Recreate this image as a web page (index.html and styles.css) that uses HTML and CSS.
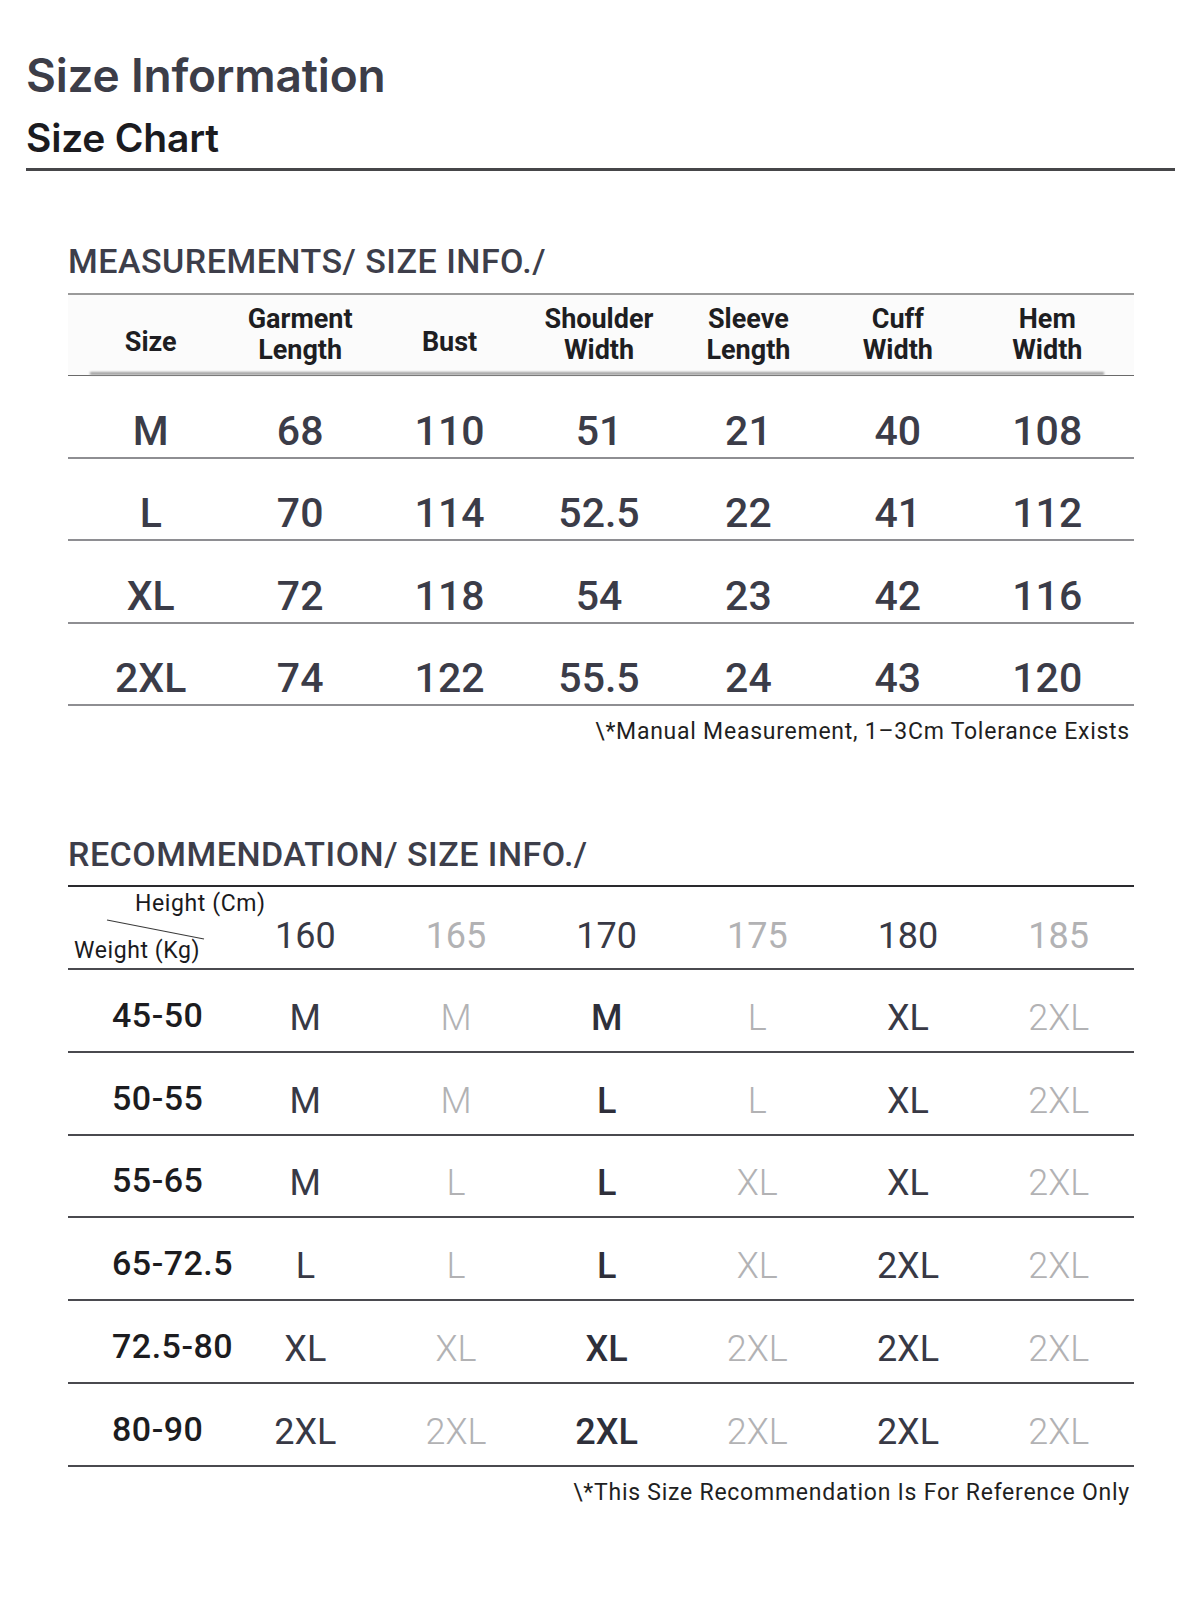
FILE: index.html
```html
<!DOCTYPE html>
<html lang="en">
<head>
<meta charset="utf-8">
<title>Size Information</title>
<link rel="stylesheet" href="styles.css">
</head>
<body>
<div class="page">
  <h1 class="title">Size Information</h1>
  <h2 class="subtitle">Size Chart</h2>
  <div class="divider"></div>

  <section class="block">
    <h3 class="section-title">MEASUREMENTS/ SIZE INFO./</h3>
    <div class="mtable">
      <div class="mhead">
        <div class="hcell single">Size</div>
        <div class="hcell">Garment<br>Length</div>
        <div class="hcell single">Bust</div>
        <div class="hcell">Shoulder<br>Width</div>
        <div class="hcell">Sleeve<br>Length</div>
        <div class="hcell">Cuff<br>Width</div>
        <div class="hcell">Hem<br>Width</div>
      </div>
      <div class="mrow"><span>M</span><span>68</span><span>110</span><span>51</span><span>21</span><span>40</span><span>108</span></div>
      <div class="mrow"><span>L</span><span>70</span><span>114</span><span>52.5</span><span>22</span><span>41</span><span>112</span></div>
      <div class="mrow"><span>XL</span><span>72</span><span>118</span><span>54</span><span>23</span><span>42</span><span>116</span></div>
      <div class="mrow"><span>2XL</span><span>74</span><span>122</span><span>55.5</span><span>24</span><span>43</span><span>120</span></div>
    </div>
    <p class="note">\*Manual Measurement, 1–3Cm Tolerance Exists</p>
  </section>

  <section class="block rec-block">
    <h3 class="section-title">RECOMMENDATION/ SIZE INFO./</h3>
    <div class="rtable">
      <div class="rhead">
        <div class="corner">
          <span class="corner-h">Height (Cm)</span>
          <span class="corner-w">Weight (Kg)</span>
          <svg class="corner-line" width="100" height="24" viewBox="0 0 100 24"><line x1="1" y1="1" x2="98" y2="20" stroke="#3a3a3a" stroke-width="1.1"/></svg>
        </div>
        <span class="hnum dark">160</span><span class="hnum light">165</span><span class="hnum dark">170</span><span class="hnum light">175</span><span class="hnum dark">180</span><span class="hnum light">185</span>
      </div>
      <div class="rrow"><span class="wt">45-50</span><span class="sz dark">M</span><span class="sz light">M</span><span class="sz mid">M</span><span class="sz light">L</span><span class="sz dark">XL</span><span class="sz light">2XL</span></div>
      <div class="rrow"><span class="wt">50-55</span><span class="sz dark">M</span><span class="sz light">M</span><span class="sz mid">L</span><span class="sz light">L</span><span class="sz dark">XL</span><span class="sz light">2XL</span></div>
      <div class="rrow"><span class="wt">55-65</span><span class="sz dark">M</span><span class="sz light">L</span><span class="sz mid">L</span><span class="sz light">XL</span><span class="sz dark">XL</span><span class="sz light">2XL</span></div>
      <div class="rrow"><span class="wt">65-72.5</span><span class="sz dark">L</span><span class="sz light">L</span><span class="sz mid">L</span><span class="sz light">XL</span><span class="sz dark">2XL</span><span class="sz light">2XL</span></div>
      <div class="rrow"><span class="wt">72.5-80</span><span class="sz dark">XL</span><span class="sz light">XL</span><span class="sz mid">XL</span><span class="sz light">2XL</span><span class="sz dark">2XL</span><span class="sz light">2XL</span></div>
      <div class="rrow"><span class="wt">80-90</span><span class="sz dark">2XL</span><span class="sz light">2XL</span><span class="sz mid">2XL</span><span class="sz light">2XL</span><span class="sz dark">2XL</span><span class="sz light">2XL</span></div>
    </div>
    <p class="note">\*This Size Recommendation Is For Reference Only</p>
  </section>
</div>
</body>
</html>
```

FILE: styles.css
```css
* { box-sizing: border-box; }

html, body {
  margin: 0;
  padding: 0;
  background: #ffffff;
}

body {
  width: 1200px;
  min-height: 1608px;
  font-family: Roboto, "Liberation Sans", sans-serif;
}

.page {
  padding: 0 25px 0 26px;
}

.title {
  margin: 46px 0 0;
  font-family: Inter, Roboto, sans-serif;
  font-size: 46px;
  line-height: 58px;
  font-weight: 600;
  color: #3c3d48;
  letter-spacing: -0.2px;
}

.subtitle {
  margin: 10px 0 0;
  font-family: Inter, Roboto, sans-serif;
  font-size: 39px;
  line-height: 48px;
  font-weight: 600;
  color: #1b1b1f;
  letter-spacing: -0.2px;
}

.divider {
  margin-top: 6px;
  height: 3px;
  background: #464649;
}

.block {
  margin-left: 42px;
  width: 1066px;
}

.section-title {
  margin: 70px 0 0 0;
  font-family: Roboto, sans-serif;
  font-size: 34px;
  line-height: 40px;
  font-weight: 500;
  color: #3d3e4a;
  letter-spacing: 0.5px;
  white-space: nowrap;
}

.rec-block .section-title {
  margin-top: 87px;
}

/* measurement table */
.mtable {
  margin-top: 12px;
}

.mhead {
  position: relative;
  display: grid;
  grid-template-columns: repeat(7, 1fr);
  padding: 0 12px 0 8px;
  height: 83px;
  align-items: center;
  border-top: 2px solid #9a9a9a;
  border-bottom: 1px solid #6a6a6a;
  background: #fbfbfb;
}

.mhead::after {
  content: "";
  position: absolute;
  left: 22px;
  right: 30px;
  bottom: 0;
  height: 3px;
  background: #9c9c9c;
  filter: blur(1px);
}

.hcell {
  text-align: center;
  font-size: 27px;
  line-height: 31px;
  font-weight: 700;
  color: #1e1e22;
}

.hcell.single {
  padding-top: 14px;
}

.mrow {
  display: grid;
  grid-template-columns: repeat(7, 1fr);
  padding: 0 12px 5px 8px;
  height: 82.6px;
  align-items: end;
  border-bottom: 2px solid #8e8e92;
}

.mrow span {
  text-align: center;
  font-size: 41px;
  line-height: 41px;
  font-weight: 500;
  color: #3b3c48;
}

.note {
  margin: 11px 4px 0 0;
  text-align: right;
  font-family: Roboto, sans-serif;
  font-size: 23px;
  line-height: 30px;
  font-weight: 400;
  color: #1f1f22;
  letter-spacing: 0.75px;
  white-space: nowrap;
}

/* recommendation table */
.rtable {
  margin-top: 11px;
  border-top: 2px solid #2a2a2e;
}

.rhead, .rrow {
  display: grid;
  grid-template-columns: 162px repeat(6, 1fr);
  border-bottom: 2px solid #4a4a4f;
}

.rhead {
  height: 83px;
}

.rrow {
  height: 82.7px;
  align-items: end;
}

.corner {
  position: relative;
  display: flex;
  flex-direction: column;
  height: 81px;
  padding-top: 4px;
  font-size: 23px;
  line-height: 26px;
  letter-spacing: 0.6px;
  color: #1a1a1d;
  white-space: nowrap;
}

.corner-h {
  padding-left: 67px;
}

.corner-w {
  margin-top: 21px;
  padding-left: 6px;
}

.corner-line {
  position: absolute;
  left: 38px;
  top: 32px;
}

.hnum {
  align-self: end;
  padding-bottom: 14px;
  text-align: center;
  font-size: 36px;
  line-height: 36px;
  font-weight: 400;
}

.dark { color: #383945; }
.mid { color: #2e2f3a; }
.light { color: #b2b2b4; }

.wt {
  padding: 0 0 19px 44px;
  font-size: 34px;
  line-height: 34px;
  font-weight: 500;
  letter-spacing: 0.5px;
  color: #1c1c20;
  white-space: nowrap;
}

.sz {
  padding-bottom: 15px;
  text-align: center;
  font-size: 36px;
  line-height: 36px;
  font-weight: 400;
}

.sz.light {
  font-weight: 300;
}

.sz.mid {
  font-weight: 500;
}
```
